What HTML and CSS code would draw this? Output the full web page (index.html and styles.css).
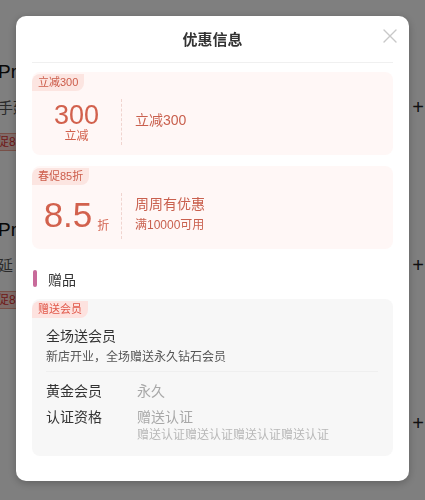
FILE: index.html
```html
<!DOCTYPE html>
<html lang="zh-CN">
<head>
<meta charset="utf-8">
<title>优惠信息</title>
<link rel="stylesheet" href="styles.css">
</head>
<body>
<div class="page">
  <div class="item">
    <div class="item-main">
      <div class="item-title">Pro</div>
      <div class="item-sub">手延</div>
      <div class="item-tag">促8</div>
    </div>
    <div class="item-plus">+</div>
  </div>
  <div class="item">
    <div class="item-main">
      <div class="item-title">Pro</div>
      <div class="item-sub">延</div>
      <div class="item-tag">促8</div>
    </div>
    <div class="item-plus">+</div>
  </div>
  <div class="item short">
    <div class="item-main">
      <div class="item-title blank"></div>
      <div class="item-sub blank"></div>
    </div>
    <div class="item-plus">+</div>
  </div>
</div>

<div class="mask"></div>

<div class="modal">
  <div class="modal-header">
    <div class="modal-title">优惠信息</div>
    <svg class="close" width="14" height="14" viewBox="0 0 14 14"><path d="M1 1L13 13M13 1L1 13" stroke="#c8c8c8" stroke-width="1.4" stroke-linecap="round"/></svg>
  </div>
  <div class="modal-body">
    <div class="card coupon">
      <div class="tag">立减300</div>
      <div class="cbody">
        <div class="cleft">
          <div class="stack">
            <div class="amount">300</div>
            <div class="unit">立减</div>
          </div>
        </div>
        <div class="cright">
          <div class="ctitle">立减300</div>
        </div>
      </div>
    </div>

    <div class="card coupon">
      <div class="tag">春促85折</div>
      <div class="cbody">
        <div class="cleft">
          <span class="big">8.5</span><span class="zhe">折</span>
        </div>
        <div class="cright">
          <div class="ctitle">周周有优惠</div>
          <div class="cdesc">满10000可用</div>
        </div>
      </div>
    </div>

    <div class="section">
      <span class="bar"></span><span class="section-title">赠品</span>
    </div>

    <div class="card gift">
      <div class="tag gift-tag">赠送会员</div>
      <div class="gbody">
        <div class="gtitle">全场送会员</div>
        <div class="gdesc">新店开业，全场赠送永久钻石会员</div>
        <div class="gline"></div>
        <div class="grow">
          <div class="glabel">黄金会员</div>
          <div class="gvalue">永久</div>
        </div>
        <div class="grow">
          <div class="glabel">认证资格</div>
          <div class="gvalue">赠送认证<div class="gnote">赠送认证赠送认证赠送认证赠送认证</div></div>
        </div>
      </div>
    </div>
  </div>
</div>
</body>
</html>
```

FILE: styles.css
```css
* { box-sizing: border-box; }
html, body { margin: 0; padding: 0; }
body {
  width: 425px;
  height: 500px;
  overflow: hidden;
  background: #fff;
  font-family: "Liberation Sans", "Noto Sans CJK SC", sans-serif;
  color: #333;
}

/* background page */
.page { padding-top: 57px; height: 500px; overflow: hidden; }
.item {
  height: 158px;
  display: flex;
  justify-content: space-between;
}
.item.short { height: 100px; }
.item-main { margin-left: -2px; width: 18px; overflow: hidden; white-space: nowrap; }
.item-title { font-size: 19px; line-height: 30px; color: #111; }
.item-sub { font-size: 15px; line-height: 22px; color: #555; margin-top: 10px; }
.item-tag {
  display: inline-block;
  margin-top: 14px;
  margin-left: -6px;
  font-size: 12px;
  line-height: 16px;
  padding: 0 4px;
  background: #ffd9d2;
  color: #d33;
  border: 1px solid #f0a090;
}
.blank { height: 30px; }
.item-plus { font-size: 20px; line-height: 20px; color: #222; margin-top: 40px; margin-right: 1px; }

.mask {
  position: fixed;
  left: 0; top: 0; right: 0; bottom: 0;
  background: rgba(0, 0, 0, 0.5);
}

/* modal */
.modal {
  position: fixed;
  left: 16px;
  top: 16px;
  width: 393px;
  height: 465px;
  background: #fff;
  border-radius: 10px;
  padding: 0 16px 0 16px;
  box-shadow: 0 2px 8px rgba(0, 0, 0, 0.25);
}
.modal-header {
  height: 47px;
  display: flex;
  align-items: center;
  justify-content: center;
  border-bottom: 1px solid #f0f0f0;
  position: relative;
}
.modal-title {
  font-size: 15px;
  font-weight: 600;
  color: #333;
  margin-top: -2px;
}
.close {
  position: absolute;
  right: -4px;
  top: 13px;
}
.modal-body { padding-top: 9px; }

.card {
  border-radius: 8px;
  overflow: hidden;
}
.coupon {
  background: #fff7f6;
  height: 83px;
  margin-bottom: 11px;
}
.tag {
  display: inline-block;
  height: 17px;
  line-height: 17px;
  font-size: 11px;
  padding: 0 6px;
  background: #fce5e1;
  color: #cc5c4a;
  border-radius: 8px 0 8px 0;
}
.cbody {
  display: flex;
  margin-top: 8px;
  height: 46px;
}
.cleft {
  width: 90px;
  border-right: 1px dashed #f0d4cf;
  display: flex;
  align-items: center;
  justify-content: center;
  color: #d2614d;
}
.stack { text-align: center; margin-top: 2px; }
.amount { font-size: 27px; line-height: 26px; }
.unit { font-size: 12px; line-height: 16px; }
.big { font-size: 35px; line-height: 40px; margin-top: -3px; }
.zhe { font-size: 12px; align-self: flex-end; margin-left: 5px; margin-bottom: 6px; }
.cright {
  padding-left: 13px;
  display: flex;
  flex-direction: column;
  justify-content: center;
  color: #c9604e;
  margin-top: -4px;
}
.ctitle { font-size: 14px; line-height: 20px; }
.cdesc { font-size: 12px; line-height: 18px; margin-top: 2px; }

.section {
  display: flex;
  align-items: center;
  margin-top: 20px;
  height: 18px;
  margin-bottom: 12px;
}
.bar {
  width: 4px;
  height: 17px;
  background: #c86a9a;
  border-radius: 2px;
  margin-left: 1px;
}
.section-title { font-size: 14px; color: #333; margin-left: 11px; margin-top: 1px; }

.gift {
  background: #f7f7f7;
  padding-bottom: 12px;
}
.gift-tag { background: #fde2df; color: #e0584a; }
.gbody { padding: 0 15px 0 14px; }
.gtitle { font-size: 14px; line-height: 20px; color: #333; margin-top: 8px; }
.gdesc { font-size: 12px; line-height: 18px; color: #555; margin-top: 2px; }
.gline { border-top: 1px solid #efefef; margin-top: 5px; margin-bottom: 9px; }
.grow { display: flex; margin-bottom: 6px; }
.grow:last-child { margin-bottom: 0; }
.glabel { width: 91px; font-size: 14px; line-height: 20px; color: #333; }
.gvalue { font-size: 14px; line-height: 20px; color: #a8a8a8; }
.gnote { font-size: 12px; line-height: 17px; color: #b8b8b8; }
```
